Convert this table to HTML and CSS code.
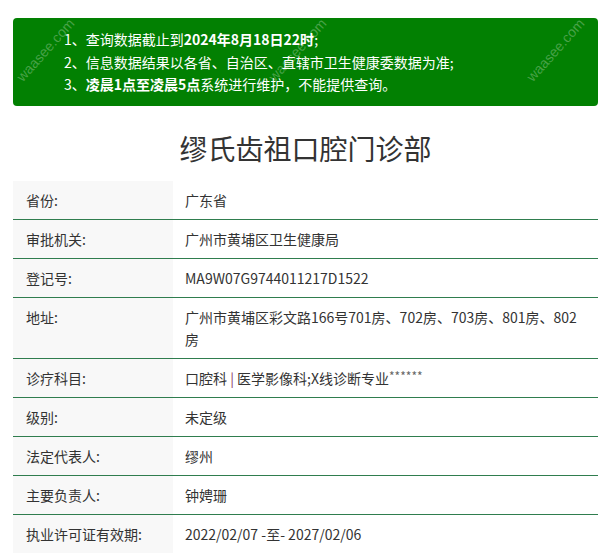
FILE: index.html
```html
<!DOCTYPE html>
<html lang="zh-CN">
<head>
<meta charset="utf-8">
<title>缪氏齿祖口腔门诊部</title>
<link rel="stylesheet" href="styles.css">
</head>
<body>
<div class="wrap">
  <div class="notice">
    <p>1、查询数据截止到<b>2024年8月18日22时</b>;</p>
    <p>2、信息数据结果以各省、自治区、直辖市卫生健康委数据为准;</p>
    <p>3、<b>凌晨1点至凌晨5点</b>系统进行维护，不能提供查询。</p>
    <span class="wm wm-a">waasee.com</span>
    <span class="wm wm-b">waasee.com</span>
    <span class="wm wm-c">waasee.com</span>
  </div>
  <h1 class="title">缪氏齿祖口腔门诊部</h1>
  <div class="info">
    <div class="row"><div class="label">省份:</div><div class="value">广东省</div></div>
    <div class="row"><div class="label">审批机关:</div><div class="value">广州市黄埔区卫生健康局</div></div>
    <div class="row"><div class="label">登记号:</div><div class="value">MA9W07G9744011217D1522</div></div>
    <div class="row"><div class="label">地址:</div><div class="value">广州市黄埔区彩文路166号701房、702房、703房、801房、802房</div></div>
    <div class="row"><div class="label">诊疗科目:</div><div class="value">口腔科 <span class="sep">|</span> 医学影像科;X线诊断专业<span class="stars">******</span></div></div>
    <div class="row"><div class="label">级别:</div><div class="value">未定级</div></div>
    <div class="row"><div class="label">法定代表人:</div><div class="value">缪州</div></div>
    <div class="row"><div class="label">主要负责人:</div><div class="value">钟娉珊</div></div>
    <div class="row"><div class="label">执业许可证有效期:</div><div class="value">2022/02/07 -至- 2027/02/06</div></div>
  </div>
</div>
</body>
</html>
```

FILE: styles.css
```css
html, body {
  margin: 0;
  padding: 0;
  background: #ffffff;
}
body {
  font-family: "Noto Sans CJK SC", "Noto Sans", sans-serif;
  font-size: 14px;
  color: #333333;
}
.wrap {
  padding: 18px 2px 0 13px;
}
.notice {
  position: relative;
  background: #028002;
  color: #ffffff;
  border-radius: 4px;
  padding: 10px 16px 10px 51px;
  line-height: 22.5px;
}
.notice p {
  position: relative;
  z-index: 1;
  margin: 0;
}
.notice b {
  font-weight: 700;
}
.wm {
  position: absolute;
  font-family: "Liberation Sans", Arial, sans-serif;
  font-size: 14px;
  line-height: 14px;
  color: rgba(255, 255, 255, 0.28);
  transform: rotate(-48deg);
  white-space: nowrap;
  pointer-events: none;
}
.wm-a { left: -7px; top: 25px; }
.wm-b { left: 245px; top: 25px; }
.wm-c { left: 503px; top: 25px; }
.title {
  margin: 22px 0 13px;
  font-size: 28px;
  line-height: 40px;
  font-weight: 400;
  text-align: center;
  color: #333333;
}
.info {
  display: flex;
  flex-direction: column;
}
.row {
  display: flex;
  border-bottom: 1px solid #2f7d4e;
}
.label {
  flex: 0 0 160px;
  box-sizing: border-box;
  padding: 8px 13px;
  background: #f8f8f8;
  line-height: 22px;
  color: #333333;
}
.value {
  flex: 1;
  padding: 8px 12px;
  line-height: 22px;
  color: #333333;
}
.sep {
  color: #8a3b63;
}
.stars {
  color: #666666;
  font-size: 12px;
  line-height: 12px;
  vertical-align: 3px;
}
```
